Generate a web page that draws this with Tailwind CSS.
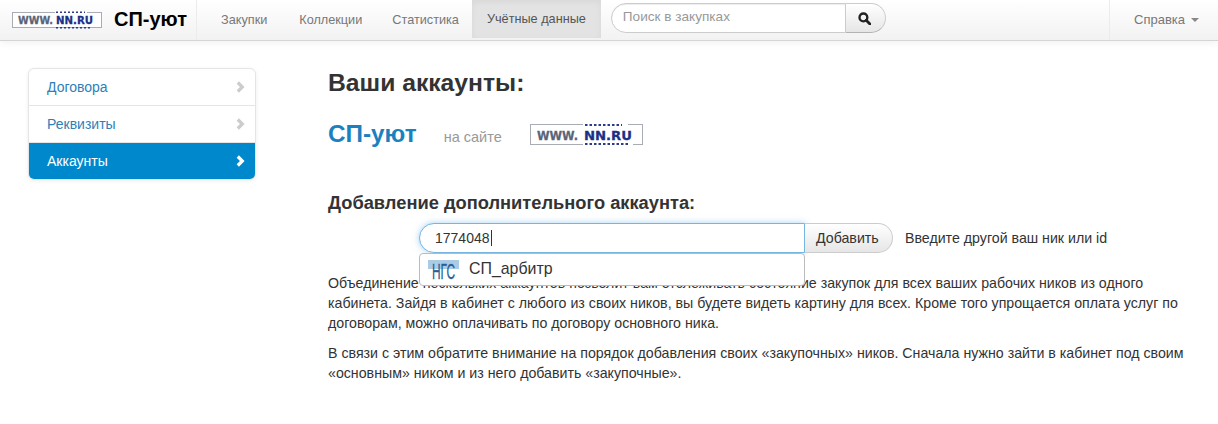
<!DOCTYPE html>
<html lang="ru">
<head>
<meta charset="utf-8">
<script src="https://cdn.jsdelivr.net/npm/@tailwindcss/browser@4"></script>
</head>
<body class="bg-white font-['Liberation_Sans',Arial,sans-serif] text-[14px] leading-5 text-[#333] h-[424px] overflow-hidden">
<header class="flex h-[41px] items-stretch border-b border-[#d4d4d4] bg-gradient-to-b from-white to-[#f2f2f2] shadow-[0_1px_8px_rgba(0,0,0,0.07)]">
  <div class="flex items-center pl-[12px] w-[196px]">
    <svg width="90" height="18" viewBox="0 0 90 18" class="block shrink-0 mt-[-1px]">
      <rect x="0.5" y="1.5" width="89" height="15" fill="#fff" stroke="#a9acb2"/>
      <rect x="43" y="0" width="32" height="3" fill="#fff"/>
      <line x1="44" y1="1.2" x2="73" y2="1.2" stroke="#2b3a8c" stroke-width="1.6" stroke-dasharray="2 2"/>
      <line x1="44" y1="16.8" x2="78" y2="16.8" stroke="#2b3a8c" stroke-width="1.6" stroke-dasharray="2 2"/>
      <text x="6" y="13" font-family="'DejaVu Sans',sans-serif" font-weight="700" font-size="11" fill="#5a6478" stroke="#5a6478" stroke-width="0.3" textLength="35" lengthAdjust="spacingAndGlyphs">WWW.</text>
      <text x="44" y="13" font-family="'DejaVu Sans',sans-serif" font-weight="700" font-size="11" fill="#1c2f86" stroke="#1c2f86" stroke-width="0.3" textLength="37" lengthAdjust="spacingAndGlyphs">NN.RU</text>
    </svg>
    <span class="ml-[12px] mb-[2px] text-[20px] font-bold text-black whitespace-nowrap">СП-уют</span>
  </div>
  <nav class="flex border-l border-[#ececec] text-[12.7px] text-[#777]">
    <a class="flex items-center pl-[24px] pr-[17px]">Закупки</a>
    <a class="flex items-center px-[15px]">Коллекции</a>
    <a class="flex items-center pl-[15px] pr-[13px]">Статистика</a>
    <a class="mb-[2px] flex items-center bg-[#e3e3e3] px-[15px] text-[#555] shadow-[inset_0_2px_6px_rgba(0,0,0,0.05)]">Учётные данные</a>
  </nav>
  <form class="ml-[10px] mt-[3px] flex h-[30px]">
    <div class="flex w-[235px] items-center rounded-l-[15px] border border-[#ccc] bg-white pl-[11px] pb-[3px] text-[13.6px] text-[#999] shadow-[inset_0_1px_1px_rgba(0,0,0,0.075)]">Поиск в закупках</div>
    <div class="flex w-[40px] items-center justify-center rounded-r-[15px] border border-l-0 border-[#ccc] border-b-[#b3b3b3] bg-gradient-to-b from-white to-[#e6e6e6]">
      <svg width="13" height="13" viewBox="0 0 12 12" class="mr-[2px]"><circle cx="5" cy="5" r="3.6" fill="none" stroke="#222" stroke-width="2.2"/><path d="M7.6 7.6L11 11" stroke="#222" stroke-width="2.6" stroke-linecap="round"/></svg>
    </div>
  </form>
  <div class="ml-auto flex w-[109px] items-center border-l border-[#ececec] pl-[24px] text-[13px] text-[#777]">
    Справка
    <span class="ml-[6px] h-0 w-0 border-x-[4px] border-t-[4px] border-x-transparent border-t-[#888]"></span>
  </div>
</header>

<div class="flex">
  <aside class="ml-[28px] mt-[27px] w-[228px] shrink-0">
    <ul class="overflow-hidden rounded-[6px] border border-[#e5e5e5] bg-white shadow-[0_1px_4px_rgba(0,0,0,0.065)]">
      <li class="flex h-[37px] items-center justify-between border-b border-[#e5e5e5] pl-[18px] pr-[10px] text-[#2e7fb8]">Договора
        <svg width="9" height="12" viewBox="0 0 9 12"><path d="M1.8 1.5L6.3 6L1.8 10.5" fill="none" stroke="#ccc" stroke-width="3.2"/></svg></li>
      <li class="flex h-[37px] items-center justify-between border-b border-[#e5e5e5] pl-[18px] pr-[10px] text-[#2e7fb8]">Реквизиты
        <svg width="9" height="12" viewBox="0 0 9 12"><path d="M1.8 1.5L6.3 6L1.8 10.5" fill="none" stroke="#ccc" stroke-width="3.2"/></svg></li>
      <li class="flex h-[36px] items-center justify-between bg-[#0088cc] pl-[18px] pr-[10px] text-white">Аккаунты
        <svg width="9" height="12" viewBox="0 0 9 12"><path d="M1.8 1.5L6.3 6L1.8 10.5" fill="none" stroke="#fff" stroke-width="3.2"/></svg></li>
    </ul>
  </aside>

  <main class="ml-[72px] w-[864px]">
    <h1 class="mt-[27px] text-[24.7px] font-bold leading-[30px]">Ваши аккаунты:</h1>
    <div class="mt-[21px] flex h-[30px] items-center">
      <span class="text-[24.3px] font-bold text-[#1a81bf]">СП-уют</span>
      <span class="ml-[27px] mt-[5px] text-[14.5px] text-[#999]">на сайте</span>
      <svg width="113" height="23" viewBox="0 0 113 23" class="ml-[28px] mt-[1px] block shrink-0">
        <rect x="0.5" y="1.5" width="112" height="20" fill="#fff" stroke="#a9acb2"/>
        <rect x="53" y="0" width="45" height="3" fill="#fff"/>
        <rect x="53" y="20" width="50" height="3" fill="#fff"/>
        <line x1="55" y1="2" x2="92" y2="2" stroke="#2b3a8c" stroke-width="2" stroke-dasharray="2.5 2"/>
        <line x1="55" y1="21" x2="99" y2="21" stroke="#2b3a8c" stroke-width="2" stroke-dasharray="2.5 2"/>
        <text x="7" y="16.5" font-family="'DejaVu Sans',sans-serif" font-weight="700" font-size="13" fill="#5a6478" stroke="#5a6478" stroke-width="0.3" textLength="41" lengthAdjust="spacingAndGlyphs">WWW.</text>
        <text x="54" y="16.5" font-family="'DejaVu Sans',sans-serif" font-weight="700" font-size="13" fill="#1c2f86" stroke="#1c2f86" stroke-width="0.3" textLength="48" lengthAdjust="spacingAndGlyphs">NN.RU</text>
      </svg>
    </div>
    <h2 class="mt-[44px] text-[18.3px] font-bold leading-5">Добавление дополнительного аккаунта:</h2>
    <div class="relative mt-[10px] flex h-[30px] items-center pl-[91px]">
      <div class="flex h-[30px] w-[386px] items-center rounded-l-[15px] border border-[#75b5e0] bg-white pl-[15px] shadow-[0_0_6px_rgba(82,168,236,0.5)]">1774048<span class="ml-px h-[16px] w-px bg-[#333]"></span></div>
      <div class="flex h-[30px] w-[88px] items-center rounded-r-[15px] border border-l-0 border-[#ccc] bg-gradient-to-b from-white to-[#e6e6e6] pl-[11px] text-[14.2px] text-[#333]">Добавить</div>
      <span class="ml-[12px] -mt-[1px] text-[14.2px]">Введите другой ваш ник или id</span>
      <div class="absolute left-[91px] top-[30px] z-10 flex h-[33px] w-[386px] items-center rounded-[4px] border border-[#bbb] bg-white pl-[8px]">
        <svg width="32" height="22" viewBox="0 0 32 22" class="block shrink-0"><rect x="0" y="1" width="31" height="9" fill="#a9cbe6"/><text x="4" y="19.5" font-family="'Liberation Sans',sans-serif" font-size="22" fill="#2a5f96" stroke="#2a5f96" stroke-width="0.3" textLength="23" lengthAdjust="spacingAndGlyphs">НГС</text></svg>
        <span class="ml-[9px] mb-[1px] text-[15.9px]">СП_арбитр</span>
      </div>
    </div>
    <p class="mt-[20px] text-[14.2px] leading-5">Объединение нескольких аккаунтов позволит вам отслеживать состояние закупок для всех ваших рабочих ников из одного кабинета. Зайдя в кабинет с любого из своих ников, вы будете видеть картину для всех. Кроме того упрощается оплата услуг по договорам, можно оплачивать по договору основного ника.</p>
    <p class="mt-[10px] text-[14.2px] leading-5">В связи с этим обратите внимание на порядок добавления своих «закупочных» ников. Сначала нужно зайти в кабинет под своим «основным» ником и из него добавить «закупочные».</p>
  </main>
</div>
</body>
</html>
